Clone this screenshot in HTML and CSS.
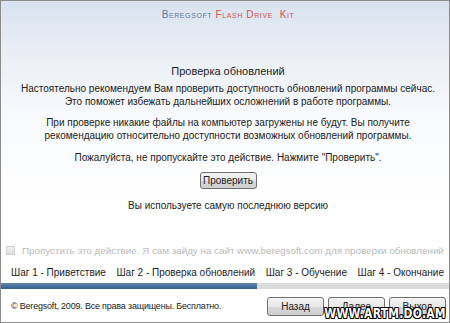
FILE: index.html
```
<!DOCTYPE html>
<html lang="ru">
<head>
    <meta charset="UTF-8">
    <title>Beregsoft Flash Drive Kit</title>
    <link rel="stylesheet" href="styles.css">
</head>
<body>
    <div class="window">
        <div class="main">
            <div class="brand"><span class="brand-name">Beregsoft</span> <span class="brand-product">Flash Drive&nbsp; Kit</span></div>
            <div class="content">
                <h2>Проверка обновлений</h2>
                <p class="p1">Настоятельно рекомендуем Вам проверить доступность обновлений программы сейчас.<br>Это поможет избежать дальнейших осложнений в работе программы.</p>
                <p class="p2">При проверке никакие файлы на компьютер загружены не будут. Вы получите<br>рекомендацию относительно доступности возможных обновлений программы.</p>
                <p class="p3">Пожалуйста, не пропускайте это действие. Нажмите "Проверить".</p>
                <button class="btn btn-check">Проверить</button>
                <p class="status">Вы используете самую последнюю версию</p>
            </div>
            <label class="skip"><span class="skip-box"></span>Пропустить это действие. Я сам зайду на сайт www.beregsoft.com для проверки обновлений</label>
            <div class="steps">
                <span>Шаг 1 - Приветствие</span>
                <span>Шаг 2 - Проверка обновлений</span>
                <span>Шаг 3 - Обучение</span>
                <span>Шаг 4 - Окончание</span>
            </div>
        </div>
        <div class="progress"><div class="progress-fill" style="width: 256px"></div></div>
        <div class="footer">
            <span class="copyright">© Beregsoft, 2009. Все права защищены. Бесплатно.</span>
            <div class="buttons">
                <button class="btn">Назад</button>
                <button class="btn">Далее</button>
                <button class="btn">Выход</button>
            </div>
            <div class="watermark">WWW.ARTM.DO.AM</div>
        </div>
    </div>
</body>
</html>
```
FILE: styles.css
```
body {
    margin: 0;
    font-family: "Liberation Sans", Arial, sans-serif;
    color: #222;
}

.window {
    width: 448px;
    height: 321px;
    border: 1px solid #8c8c8c;
    display: flex;
    flex-direction: column;
    position: relative;
}

.main {
    height: 282px;
    display: flex;
    flex-direction: column;
    background: linear-gradient(#d8e2ee 0, #e9eef6 50px, #f7f9fc 110px, #fff 200px);
}

.brand {
    margin-top: 8px;
    text-align: center;
    font-size: 10px;
    line-height: 12px;
    font-variant: small-caps;
    letter-spacing: 0.6px;
    padding-left: 6px;
}

.brand-name {
    color: #5b78a3;
}

.brand-product {
    color: #d4534c;
}

.content {
    margin-top: 43px;
    display: flex;
    flex-direction: column;
    align-items: center;
    text-align: center;
    font-size: 10px;
    line-height: 13px;
    padding-left: 6px;
    white-space: nowrap;
}

.content h2 {
    margin: 0;
    font-size: 11px;
    font-weight: normal;
    line-height: 14px;
}

.content p {
    margin: 0;
}

.content .p1 {
    margin-top: 4px;
}

.content .p2 {
    margin-top: 8px;
}

.content .p3 {
    margin-top: 9px;
}

.btn {
    font-family: "Liberation Sans", Arial, sans-serif;
    font-size: 10px;
    color: #222;
    width: 57px;
    height: 19px;
    padding: 0;
    border: 1px solid #707070;
    border-radius: 3px;
    background: linear-gradient(#f4f4f4 0, #e8e8e8 50%, #d8d8d8 51%, #cfcfcf 100%);
}

.btn-check {
    margin-top: 8px;
    height: 17px;
}

.content .status {
    margin-top: 10px;
}

.skip {
    margin-top: auto;
    display: flex;
    align-items: center;
    gap: 7px;
    padding-left: 5px;
    font-size: 9.8px;
    line-height: 13px;
    color: #b9b9b9;
    white-space: nowrap;
}

.skip-box {
    flex-shrink: 0;
    width: 7px;
    height: 7px;
    border: 1px solid #cfcfcf;
    background: linear-gradient(#f0f0f0, #dcdcdc);
}

.steps {
    margin-top: 9px;
    margin-bottom: 4px;
    display: flex;
    justify-content: space-between;
    padding: 0 5px 0 10px;
    font-size: 10px;
    line-height: 13px;
    white-space: nowrap;
}

.progress {
    height: 6px;
    background: #dcdcdc;
}

.progress-fill {
    height: 100%;
    background: linear-gradient(#5f87b0, #35618f);
}

.footer {
    flex: 1;
    display: flex;
    align-items: center;
    justify-content: space-between;
    padding: 0 3px 0 10px;
    background: #fff;
    font-size: 9px;
    letter-spacing: -0.2px;
}

.buttons {
    display: flex;
    gap: 4px;
    margin-top: 2px;
    letter-spacing: 0;
}

.watermark {
    position: absolute;
    right: 3px;
    bottom: 1px;
    font-family: "DejaVu Sans", sans-serif;
    font-weight: bold;
    font-size: 14px;
    letter-spacing: 0.3px;
    color: #fff;
    transform: scaleX(0.77);
    transform-origin: right;
    text-shadow: 1px 0 0 #000, -1px 0 0 #000, 0 1px 0 #000, 0 -1px 0 #000, 1px 1px 0 #000, -1px -1px 0 #000, 1px -1px 0 #000, -1px 1px 0 #000;
}
```
